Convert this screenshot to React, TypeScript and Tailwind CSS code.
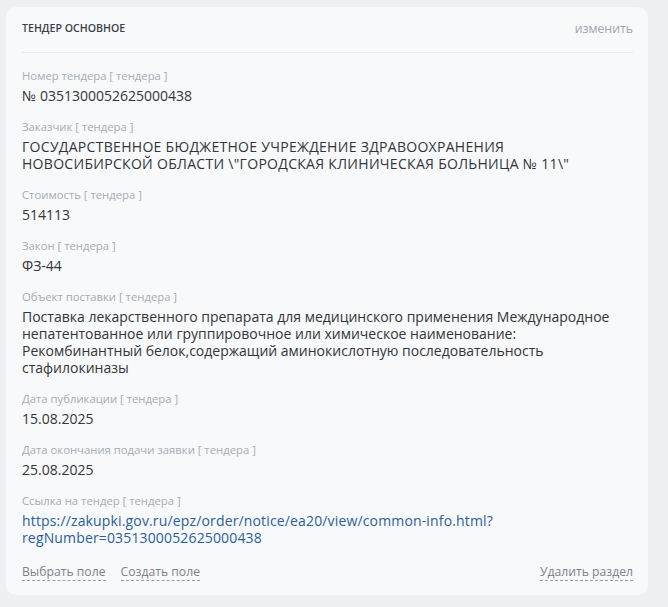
import React from "react";

const font = { fontFamily: '"Open Sans", "Noto Sans", "Liberation Sans", sans-serif' };

function Field({ label, children }: { label: string; children: React.ReactNode }) {
  return (
    <div className="flex flex-col">
      <div className="text-[11.3px] leading-[17px] text-[#a6acb3] mb-[3px]">{label}</div>
      <div className="text-[14px] leading-[17px] text-[#333639]">{children}</div>
    </div>
  );
}

export default function App() {
  return (
    <div className="w-[668px] h-[607px] bg-[#eef1f4] pt-[7px] pl-[6px] pr-[20px]" style={font}>
      <div className="bg-[#f7f9fb] rounded-[10px] pt-[14px] pb-[14px] pl-[16px] pr-[15px] h-[588px] flex flex-col">
        <div className="flex items-center justify-between h-4">
          <span className="text-[10.6px] font-semibold text-[#3c4146] uppercase">Тендер основное</span>
          <span className="text-[12.3px] text-[#a0a5ab]">изменить</span>
        </div>
        <div className="h-px bg-[#e6e9ed] mt-[15px] mb-[14px]" />
        <div className="flex flex-col gap-[14px]">
          <Field label="Номер тендера [ тендера ]">№ 0351300052625000438</Field>
          <Field label="Заказчик [ тендера ]">
            <span className="tracking-[0.3px]">
              ГОСУДАРСТВЕННОЕ БЮДЖЕТНОЕ УЧРЕЖДЕНИЕ ЗДРАВООХРАНЕНИЯ<br />
              НОВОСИБИРСКОЙ ОБЛАСТИ \"ГОРОДСКАЯ КЛИНИЧЕСКАЯ БОЛЬНИЦА № 11\"
            </span>
          </Field>
          <Field label="Стоимость [ тендера ]">514113</Field>
          <Field label="Закон [ тендера ]">ФЗ-44</Field>
          <Field label="Объект поставки [ тендера ]">
            Поставка лекарственного препарата для медицинского применения Международное<br />
            непатентованное или группировочное или химическое наименование:<br />
            Рекомбинантный белок,содержащий аминокислотную последовательность<br />
            стафилокиназы
          </Field>
          <Field label="Дата публикации [ тендера ]">15.08.2025</Field>
          <Field label="Дата окончания подачи заявки [ тендера ]">25.08.2025</Field>
          <Field label="Ссылка на тендер [ тендера ]">
            <span className="text-[#2b5e9c] tracking-[0.15px]">
              https://zakupki.gov.ru/epz/order/notice/ea20/view/common-info.html?<br />
              regNumber=0351300052625000438
            </span>
          </Field>
        </div>
        <div className="flex items-center justify-between mt-[17px] text-[12.2px] leading-[17px] text-[#7d838a]">
          <div className="flex gap-[15px]">
            <span className="border-b border-dashed border-[#9aa0a6]">Выбрать поле</span>
            <span className="border-b border-dashed border-[#9aa0a6]">Создать поле</span>
          </div>
          <span className="border-b border-dashed border-[#9aa0a6]">Удалить раздел</span>
        </div>
      </div>
    </div>
  );
}
